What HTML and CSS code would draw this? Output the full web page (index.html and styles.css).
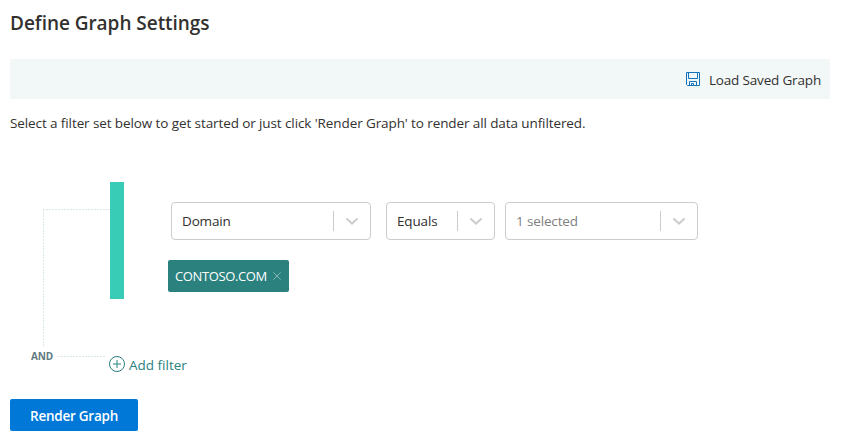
FILE: index.html
```html
<!DOCTYPE html>
<html lang="en">
<head>
<meta charset="utf-8">
<title>Define Graph Settings</title>
<link rel="stylesheet" href="styles.css">
</head>
<body>
<main class="panel">
  <h1 class="title"><span>Define Graph Settings</span></h1>
  <div class="toolbar">
    <svg class="save-icon" width="16" height="16" viewBox="0 0 16 16" fill="none" stroke="#1473bd">
      <path d="M1.5 1.5h13v13h-12l-1-1zM3.5 1.5v6h9v-6M4.5 14.5v-4h7v4M6.5 14.5v-2h2v2"/>
    </svg>
    <span class="toolbar-label">Load Saved Graph</span>
  </div>
  <p class="intro"><span>Select a filter set below to get started or just click 'Render Graph' to render all data unfiltered.</span></p>
  <section class="builder">
    <div class="connector"><div class="bracket"></div></div>
    <div class="bar"></div>
    <div class="filter">
      <div class="selects">
        <div class="select field"><span class="value domain">Domain</span><i class="sep"></i><svg class="chevron" width="20" height="20" viewBox="0 0 20 20"><path d="M5 8l5 4.6L15 8"/></svg></div>
        <div class="select operator"><span class="value equals">Equals</span><i class="sep"></i><svg class="chevron" width="20" height="20" viewBox="0 0 20 20"><path d="M5 8l5 4.6L15 8"/></svg></div>
        <div class="select values"><span class="value muted">1 selected</span><i class="sep"></i><svg class="chevron" width="20" height="20" viewBox="0 0 20 20"><path d="M5 8l5 4.6L15 8"/></svg></div>
      </div>
      <div class="chip"><span class="chip-label">CONTOSO.COM</span><svg width="8" height="8" viewBox="0 0 8 8" stroke="#8dbdba" stroke-width=".9"><path d="M.3.3l7.4 7.4M7.7.3L.3 7.7"/></svg></div>
    </div>
  </section>
  <div class="footer-row">
    <span class="and">AND</span><i class="dash"></i>
    <div class="add"><svg width="16" height="16" viewBox="0 0 16 16" fill="none" stroke="#2a8280"><circle cx="8" cy="8" r="7.5"/><path d="M8 4v8M4 8h8"/></svg><span class="add-label">Add filter</span></div>
  </div>
  <button class="render"><span>Render Graph</span></button>
</main>
</body>
</html>
```
FILE: styles.css
```css
* { box-sizing: border-box; }
body {
  margin: 0;
  background: #fff;
  color: #323130;
  font: 13.5px/20px "Open Sans", "Noto Sans", sans-serif;
}
.panel { width: 841px; height: 439px; padding: 10px 11px 0 10px; overflow: hidden; }
.title { margin: 0; height: 49px; font-size: 19px; line-height: 26px; font-weight: 600; letter-spacing: -0.04px; white-space: nowrap; }
.toolbar { height: 40px; background: #f2f8f8; display: flex; align-items: center; justify-content: flex-end; padding: 2px 9px 0 0; }
.save-icon { margin: -3px 8px 0 0; }
.toolbar-label { white-space: nowrap; letter-spacing: -0.17px; }
.intro { margin: 0; height: 83px; padding-top: 14px; white-space: nowrap; letter-spacing: -0.1px; }
.builder { display: flex; height: 117px; }
.connector { width: 100px; padding: 27px 0 0 33px; }
.bracket {
  height: 137px;
  background:
    repeating-linear-gradient(90deg, #dbe8e8 0 2px, #fff 2px 3px) 0 0 / 100% 1px no-repeat,
    repeating-linear-gradient(#dbe8e8 0 2px, #fff 2px 3px) 0 0 / 1px 100% no-repeat;
}
.bar { width: 14px; background: #38cbb5; }
.filter { padding: 20px 0 0 44px; }
.selects { display: flex; padding-left: 3px; }
.select { height: 38px; border: 1px solid #ccc; border-radius: 4px; display: flex; align-items: center; padding: 0 8px 0 10px; }
.field { width: 200px; margin-right: 15px; }
.operator { width: 109px; margin-right: 10px; }
.values { width: 193px; }
.value { flex: 1; white-space: nowrap; letter-spacing: -0.15px; }
.muted { color: #808080; }
.sep { width: 1px; height: 20px; background: #ccc; }
.chevron { margin-left: 8px; fill: none; stroke: #ccc; stroke-width: 2; stroke-linecap: round; }
.chip { width: 121px; height: 32px; margin-top: 20px; border-radius: 2px; background: #2a817e; color: #fff; display: flex; align-items: center; padding-left: 7px; font-size: 13px; letter-spacing: -0.38px; }
.chip-label { width: 98px; white-space: nowrap; }
.footer-row { display: flex; height: 100px; padding: 47px 0 0 21px; }
.and { width: 27px; height: 20px; font-size: 10px; font-weight: 700; letter-spacing: -0.15px; color: #60797f; }
.dash { width: 47px; height: 1px; margin-top: 10px; background: repeating-linear-gradient(90deg, #dbe8e8 0 2px, #fff 2px 3px); }
.add { display: flex; align-items: center; height: 20px; margin: 8px 0 0 4px; color: #2a8280; }
.add-label { margin: 2px 0 0 4px; white-space: nowrap; }
.render { display: block; width: 128px; height: 32px; padding: 2px 0 0; border: 0; border-radius: 2px; background: #0078d7; color: #fff; font: 600 13.5px/20px "Open Sans", sans-serif; letter-spacing: -0.25px; }
```
